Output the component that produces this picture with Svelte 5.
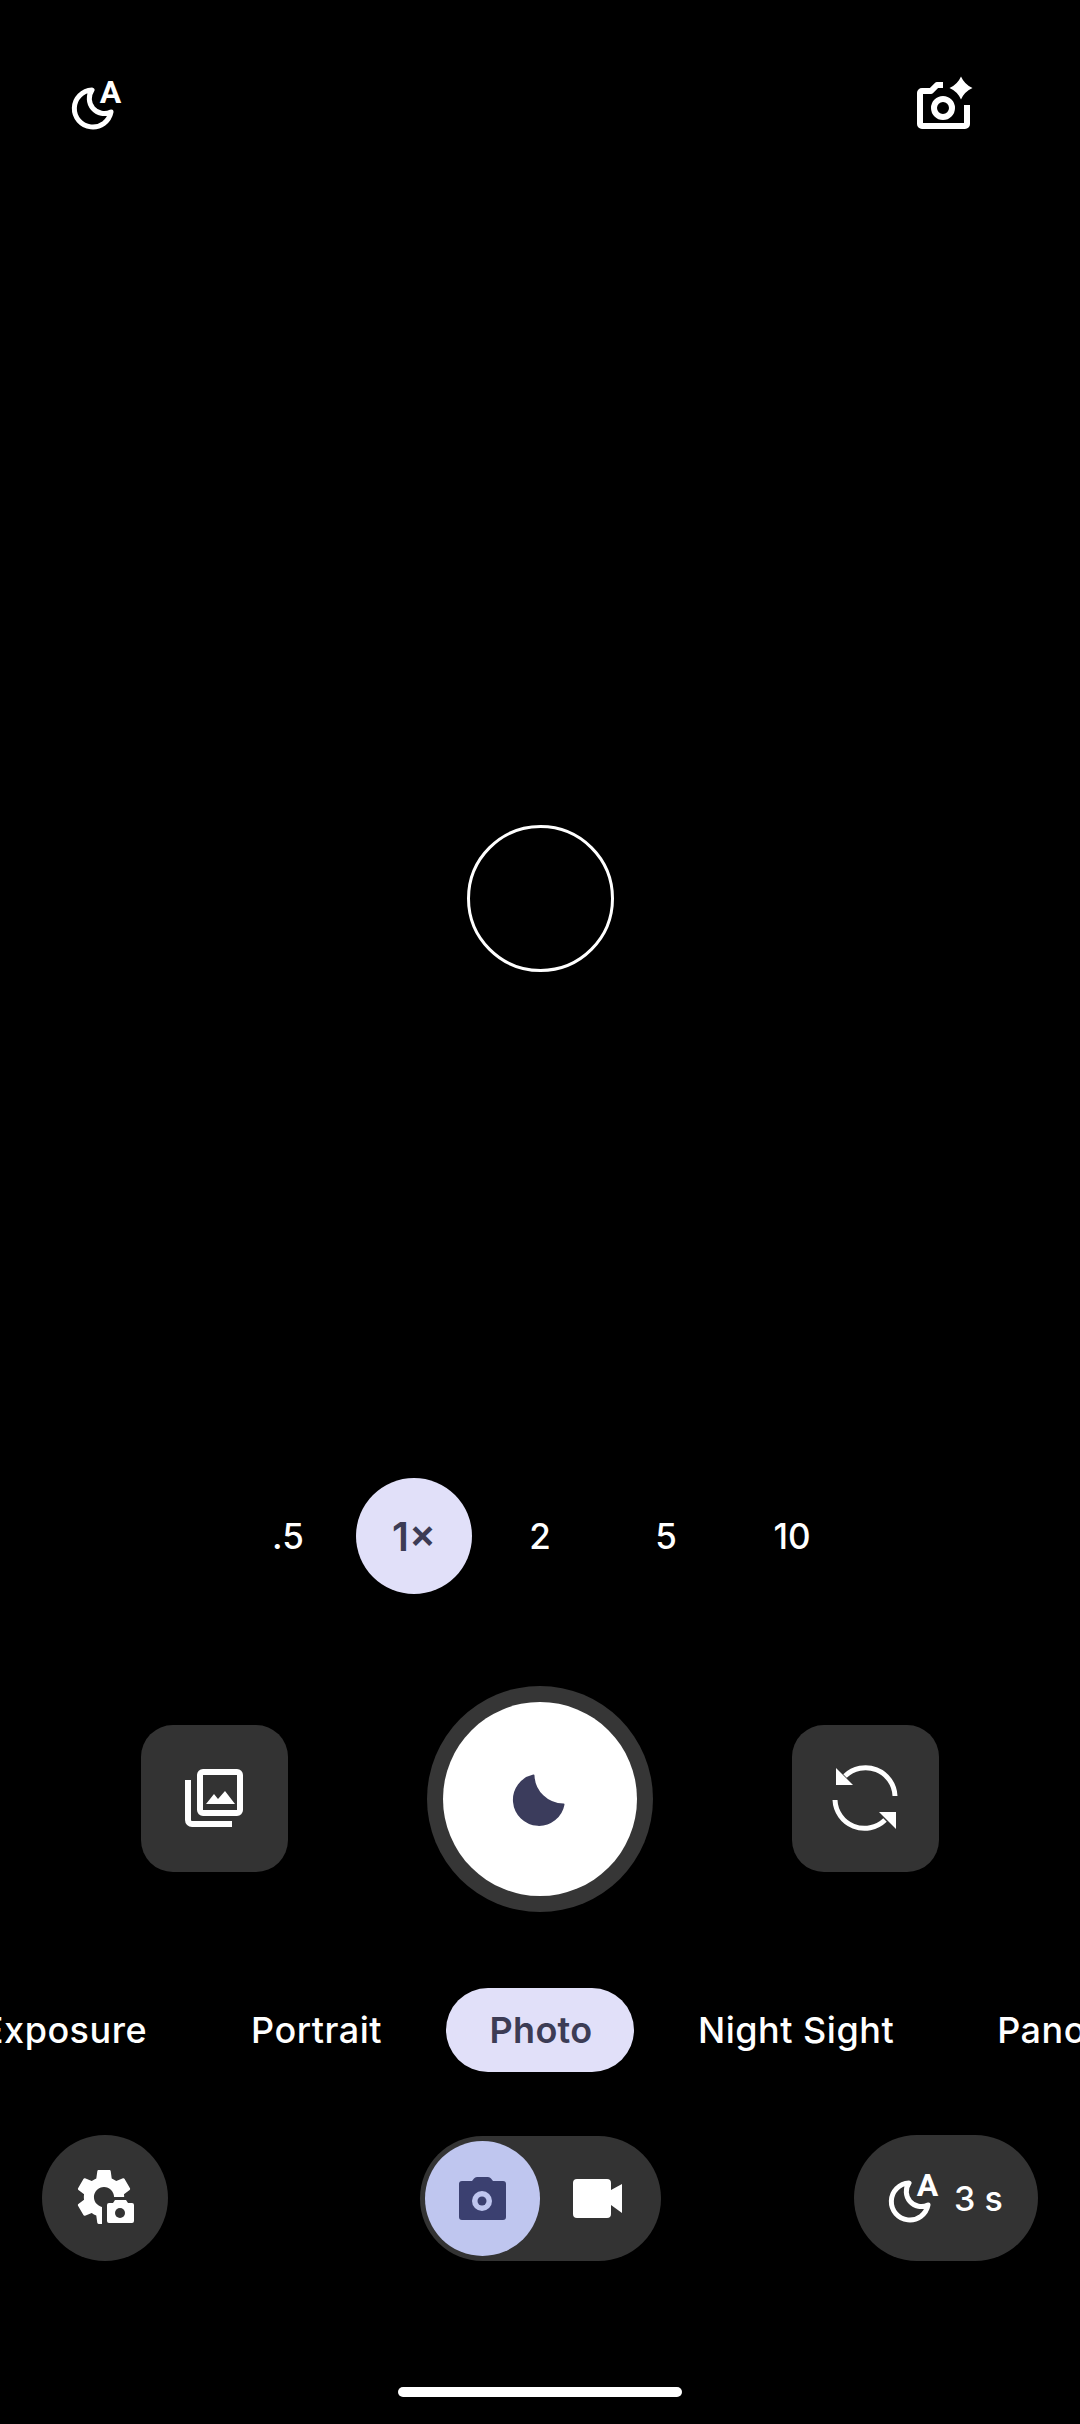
<script>
  const zooms = ['.5', '1×', '2', '5', '10']
  const modesLeft = ['Exposure', 'Portrait']
  const modesRight = ['Night Sight', 'Pano']
</script>

{#snippet nightIcon()}
  <svg class="night" width="60" height="60" viewBox="0 0 60 60">
    <path d="M26 15A18.5 18.5 0 1 0 45 37A15 15 0 0 1 26 15Z" fill="none" stroke="#fff" stroke-width="5" stroke-linejoin="round" />
    <text x="44.5" y="28" text-anchor="middle" class="night-a">A</text>
  </svg>
{/snippet}

<div class="screen">
  <div class="top">
    {@render nightIcon()}
    <svg width="70" height="70" viewBox="0 0 70 70">
      <path d="M57 35V54a2 2 0 0 1-2 2H12a2 2 0 0 1-2-2V23a2 2 0 0 1 2-2h9l6-6h6" fill="none" stroke="#fff" stroke-width="6" stroke-linejoin="round" />
      <circle cx="33" cy="38" r="9" fill="none" stroke="#fff" stroke-width="6" />
      <path d="M51 6.5Q54.5 14.5 62.5 18Q54.5 21.5 51 29.5Q47.5 21.5 39.5 18Q47.5 14.5 51 6.5Z" fill="#fff" />
    </svg>
  </div>

  <div class="focus"></div>

  <div class="zoom-row">
    {#each zooms as z, i}
      <div class="zoom" class:active={i === 1}>{z}</div>
    {/each}
  </div>

  <div class="shutter-row">
    <div class="tile">
      <svg width="61" height="61" viewBox="0 0 61 61">
        <rect x="16" y="4" width="40" height="41" rx="3" fill="none" stroke="#fff" stroke-width="6" />
        <path d="M4 12V52a4 4 0 0 0 4 4H48" fill="none" stroke="#fff" stroke-width="6" />
        <polygon points="22,36 30,26 34,31 41,23 51,36" fill="#fff" />
      </svg>
    </div>
    <div class="shutter">
      <div class="shutter-inner">
        <svg width="52" height="52" viewBox="0 0 52 52">
          <path d="M19.5 2.5A25 25 0 1 0 49.5 31.5A30 30 0 0 1 19.5 2.5Z" fill="#3b3c5c" stroke="#3b3c5c" stroke-width="2" stroke-linejoin="round" />
        </svg>
      </div>
    </div>
    <div class="tile">
      <svg width="81" height="81" viewBox="0 0 81 81">
        <path d="M70 38A29.5 29.5 0 0 0 20 18" fill="none" stroke="#fff" stroke-width="5" />
        <polygon points="11,10 11,27 28,27" fill="#fff" />
        <path d="M10 42A29.5 29.5 0 0 0 60 62" fill="none" stroke="#fff" stroke-width="5" />
        <polygon points="71,54 71,71 54,54" fill="#fff" />
      </svg>
    </div>
  </div>

  <div class="modes">
    <div class="side left">
      {#each modesLeft as m}
        <span class="mode">{m}</span>
      {/each}
    </div>
    <span class="mode current">Photo</span>
    <div class="side right">
      {#each modesRight as m}
        <span class="mode">{m}</span>
      {/each}
    </div>
  </div>

  <div class="bottom">
    <div class="round">
      <svg width="66" height="66" viewBox="0 0 66 66">
        <g transform="translate(-1.6 -1.6) scale(2.8)">
          <path fill="#fff" d="M19.14 12.94c.04-.3.06-.61.06-.94 0-.32-.02-.64-.07-.94l2.03-1.58c.18-.14.23-.41.12-.61l-1.92-3.32c-.12-.22-.37-.29-.59-.22l-2.39.96c-.5-.38-1.03-.7-1.62-.94l-.36-2.54c-.04-.24-.24-.41-.48-.41h-3.84c-.24 0-.43.17-.47.41l-.36 2.54c-.59.24-1.13.57-1.62.94l-2.39-.96c-.22-.08-.47 0-.59.22L2.74 8.87c-.12.21-.08.47.12.61l2.03 1.58c-.05.3-.09.63-.09.94s.02.64.07.94l-2.03 1.58c-.18.14-.23.41-.12.61l1.92 3.32c.12.22.37.29.59.22l2.39-.96c.5.38 1.03.7 1.62.94l.36 2.54c.05.24.24.41.48.41h3.84c.24 0 .44-.17.47-.41l.36-2.54c.59-.24 1.13-.56 1.62-.94l2.39.96c.22.08.47 0 .59-.22l1.92-3.32c.12-.22.07-.47-.12-.61l-2.01-1.58zM12 15.6c-1.98 0-3.6-1.62-3.6-3.6s1.62-3.6 3.6-3.6 3.6 1.62 3.6 3.6-1.62 3.6-3.6 3.6z" />
        </g>
        <rect x="30" y="32" width="36" height="30" fill="#333" />
        <path d="M37 38H41L43 35H54L56 38H60a2 2 0 0 1 2 2V56a2 2 0 0 1-2 2H37a2 2 0 0 1-2-2V40a2 2 0 0 1 2-2Z" fill="#fff" />
        <circle cx="48" cy="48" r="5" fill="#333" />
      </svg>
    </div>

    <div class="toggle">
      <div class="toggle-item selected">
        <svg width="61" height="61" viewBox="0 0 61 61">
          <path d="M10 13H20L22 10.5Q23 9 25 9H36Q38 9 39 10.5L41 13H51a3 3 0 0 1 3 3V49a3 3 0 0 1-3 3H10a3 3 0 0 1-3-3V16a3 3 0 0 1 3-3Z" fill="#3b4070" />
          <circle cx="30" cy="33" r="10" fill="#bfc6ef" />
          <circle cx="30" cy="33" r="4.5" fill="#3b4070" />
        </svg>
      </div>
      <div class="toggle-item">
        <svg width="61" height="61" viewBox="0 0 61 61">
          <path d="M9 11H39a4 4 0 0 1 4 4V22L54 16V45L43 37V46a4 4 0 0 1-4 4H9a4 4 0 0 1-4-4V15a4 4 0 0 1 4-4Z" fill="#fff" />
        </svg>
      </div>
    </div>

    <div class="timer">
      {@render nightIcon()}
      <span class="timer-label">3 s</span>
    </div>
  </div>

  <div class="home"></div>
</div>

<style>
  :global(body) {
    background: #000;
  }
  .screen {
    width: 1080px;
    height: 2424px;
    background: #000;
    color: #fff;
    font-family: Inter, "Noto Sans", sans-serif;
    display: flex;
    flex-direction: column;
    overflow: hidden;
  }
  svg {
    display: block;
    flex: none;
    overflow: visible;
  }
  .night-a {
    font-family: Roboto, sans-serif;
    font-size: 32px;
    font-weight: 700;
    fill: #fff;
  }
  .top {
    display: flex;
    justify-content: space-between;
    align-items: center;
    padding: 70px 100px 0 66px;
  }
  .focus {
    width: 147px;
    height: 147px;
    box-sizing: border-box;
    border: 3px solid #fff;
    border-radius: 50%;
    margin: 685px auto 0;
  }
  .zoom-row {
    display: flex;
    justify-content: center;
    gap: 10px;
    margin-top: 506px;
  }
  .zoom {
    width: 116px;
    height: 116px;
    border-radius: 50%;
    display: flex;
    align-items: center;
    justify-content: center;
    font-size: 35px;
    font-weight: 500;
  }
  .zoom.active {
    background: #e1e0f9;
    color: #3c3c55;
    font-size: 40px;
    font-weight: 600;
  }
  .shutter-row {
    display: flex;
    justify-content: space-between;
    align-items: center;
    padding: 0 141px;
    margin-top: 92px;
  }
  .tile {
    width: 147px;
    height: 147px;
    margin-bottom: 1px;
    border-radius: 32px;
    background: #333;
    display: flex;
    align-items: center;
    justify-content: center;
  }
  .shutter {
    width: 226px;
    height: 226px;
    box-sizing: border-box;
    border-radius: 50%;
    background: #363636;
    padding: 16px;
  }
  .shutter-inner {
    width: 100%;
    height: 100%;
    border-radius: 50%;
    background: #fff;
    display: flex;
    align-items: center;
    justify-content: center;
  }
  .modes {
    display: grid;
    grid-template-columns: 1fr 188px 1fr;
    gap: 21px;
    margin-top: 76px;
    height: 84px;
    font-size: 36px;
    font-weight: 500;
    letter-spacing: 0.5px;
    white-space: nowrap;
  }
  .side {
    display: flex;
    min-width: 0;
    overflow: hidden;
  }
  .side.left {
    justify-content: flex-end;
    gap: 18px;
  }
  .side.right {
    gap: 17px;
  }
  .mode {
    padding: 0 43px;
    line-height: 84px;
    flex: none;
  }
  .mode.current {
    padding: 0 0 0 2px;
    text-align: center;
    background: #e1e0f9;
    color: #3c3c55;
    border-radius: 42px;
    font-weight: 600;
    letter-spacing: 0.3px;
  }
  .bottom {
    display: grid;
    grid-template-columns: 1fr 241px 1fr;
    align-items: center;
    padding: 0 42px;
    margin-top: 63px;
  }
  .round {
    width: 126px;
    height: 126px;
    border-radius: 50%;
    background: #333;
    display: flex;
    align-items: center;
    justify-content: center;
  }
  .toggle {
    display: flex;
    gap: 1px;
    padding: 5px;
    box-sizing: border-box;
    height: 125px;
    border-radius: 63px;
    background: #333;
  }
  .toggle-item {
    width: 115px;
    height: 115px;
    border-radius: 50%;
    display: flex;
    align-items: center;
    justify-content: center;
  }
  .toggle-item.selected {
    background: #bfc6ef;
  }
  .timer {
    justify-self: end;
    width: 184px;
    height: 126px;
    box-sizing: border-box;
    padding-left: 29px;
    border-radius: 63px;
    background: #333;
    display: flex;
    align-items: center;
    gap: 11px;
  }
  .timer-label {
    font-size: 34px;
    font-weight: 500;
  }
  .home {
    width: 284px;
    height: 10px;
    border-radius: 5px;
    background: #fff;
    margin: 126px auto 0;
  }
</style>
